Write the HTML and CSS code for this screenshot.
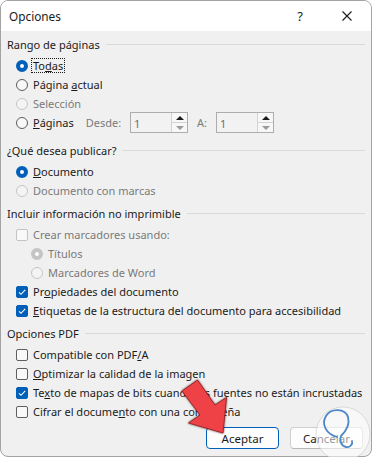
FILE: index.html
```html
<!DOCTYPE html>
<html lang="es">
  <head>
    <meta charset="utf-8">
    <title>Opciones</title>
    <link rel="stylesheet" href="styles.css">
  </head>
  <body>
    <div class="dialog">
      <div class="titlebar">
        <span class="title">Opciones</span>
        <span class="help">?</span>
        <span class="close">
          <svg width="10" height="10" viewBox="0 0 10 10"><path d="M0.5 0.5 L9.5 9.5 M9.5 0.5 L0.5 9.5" stroke="#1a1a1a" stroke-width="1.1" fill="none"/></svg>
        </span>
      </div>

      <div class="content">
        <div class="group-head"><span>Rango de páginas</span><i class="rule"></i></div>
        <div class="opt tight"><span class="radio on"></span><span class="focus">To<u>d</u>as</span></div>
        <div class="opt"><span class="radio"></span><span>Página <u>a</u>ctual</span></div>
        <div class="opt disabled"><span class="radio"></span><span>Selección</span></div>
        <div class="opt">
          <span class="radio"></span><span><u>P</u>áginas</span>
          <span class="muted desde">Desde:</span>
          <span class="spin"><span class="val">1</span><span class="arrows"><b class="up"></b><b class="down"></b></span></span>
          <span class="muted a-label">A:</span>
          <span class="spin"><span class="val">1</span><span class="arrows"><b class="up"></b><b class="down"></b></span></span>
        </div>

        <div class="group-head g2"><span>¿Qué desea publicar?</span><i class="rule"></i></div>
        <div class="opt"><span class="radio on"></span><span><u>D</u>ocumento</span></div>
        <div class="opt disabled"><span class="radio"></span><span>Documento con marcas</span></div>

        <div class="group-head g3"><span>Incluir información no imprimible</span><i class="rule"></i></div>
        <div class="opt disabled"><span class="check"></span><span>Crear marcadores usando:</span></div>
        <div class="opt sub disabled"><span class="radio on"></span><span>Títulos</span></div>
        <div class="opt sub disabled"><span class="radio"></span><span>Marcadores de Word</span></div>
        <div class="opt"><span class="check on"><svg width="12" height="12" viewBox="0 0 12 12"><path d="M3 6.3 L5 8.3 L9.2 3.8" stroke="#fff" stroke-width="1.1" fill="none"/></svg></span><span>Pr<u>o</u>piedades del documento</span></div>
        <div class="opt"><span class="check on"><svg width="12" height="12" viewBox="0 0 12 12"><path d="M3 6.3 L5 8.3 L9.2 3.8" stroke="#fff" stroke-width="1.1" fill="none"/></svg></span><span><u>E</u>tiquetas de la estructura del documento para accesibilidad</span></div>

        <div class="group-head g3"><span>Opciones PDF</span><i class="rule"></i></div>
        <div class="opt"><span class="check"></span><span>Compatible con PDF<u>/</u>A</span></div>
        <div class="opt"><span class="check"></span><span><u>O</u>ptimizar la calidad de la imagen</span></div>
        <div class="opt"><span class="check on"><svg width="12" height="12" viewBox="0 0 12 12"><path d="M3 6.3 L5 8.3 L9.2 3.8" stroke="#fff" stroke-width="1.1" fill="none"/></svg></span><span>Te<u>x</u>to de mapas de bits cuando las fuentes no están incrustadas</span></div>
        <div class="opt"><span class="check"></span><span>Cifrar el docume<u>n</u>to con una contraseña</span></div>

        <div class="buttons">
          <button class="btn primary">Aceptar</button>
          <button class="btn">Cancelar</button>
        </div>
      </div>
    </div>

    <svg class="overlay" width="372" height="458" viewBox="0 0 372 458">
      <defs>
        <filter id="shade" x="-20%" y="-20%" width="140%" height="140%">
          <feDropShadow dx="0" dy="0" stdDeviation="1.2" flood-color="#3a0000" flood-opacity="0.8"/>
        </filter>
      </defs>
      <polygon points="182,391 197.5,380 215,405 226.5,397.5 223,433 188.5,423 200,415" fill="#ef4347" stroke="#8a1c1c" stroke-width="0.8" filter="url(#shade)"/>
      <circle cx="343" cy="434" r="27" fill="rgba(255,255,255,0.55)" stroke="rgba(190,190,190,0.5)" stroke-width="1"/>
      <path d="M337 437 C326 434 321 424 326 416 C331 408 345 408 348 417 C350 424 346 431 341 436 C339 440 341 446 346 447 C350 448 353 444 352 441" fill="none" stroke="#4d86c9" stroke-width="1.8" stroke-linecap="round"/>
    </svg>
  </body>
</html>
```

FILE: styles.css
```css
* {
  box-sizing: border-box;
}

body {
  margin: 0;
  position: relative;
  background: #ffffff;
  font-family: "Noto Sans", "Open Sans", sans-serif;
  font-size: 11px;
  color: #1b1b1b;
}

.dialog {
  height: 457px;
  border: 1px solid #a3a3a3;
  border-radius: 8px;
  background: #f0f0f0;
  overflow: hidden;
}

.titlebar {
  height: 30px;
  background: #ffffff;
  display: flex;
  align-items: center;
  padding-left: 8px;
}

.title {
  flex: 1;
  font-size: 11.8px;
}

.help {
  font-size: 13px;
  margin-right: 39px;
}

.close {
  display: flex;
  margin-right: 19px;
}

.content {
  padding: 4px 6px 0 6px;
}

.group-head {
  height: 19px;
  display: flex;
  align-items: center;
  margin-bottom: 2px;
}

.group-head .rule {
  flex: 1;
  height: 1px;
  background: #d9d9d9;
  margin-left: 6px;
}

.g2 {
  margin-top: 9px;
}

.g3 {
  margin-top: 4px;
}

.opt {
  height: 19px;
  display: flex;
  align-items: center;
  gap: 5px;
  padding-left: 9px;
  white-space: nowrap;
}

.opt.tight {
  gap: 3px;
}

.opt.sub {
  padding-left: 24px;
}

.opt.disabled {
  color: #7a7a7a;
}

.focus {
  border: 1px dotted #1b1b1b;
  padding: 0 1px;
  line-height: 13px;
}

.radio {
  width: 12px;
  height: 12px;
  flex: none;
  border-radius: 50%;
  border: 1px solid #5c5c5c;
  background: #f8f8f8;
}

.radio.on {
  border: 4px solid #005fb8;
  background: #ffffff;
}

.disabled .radio {
  border-color: #c6c6c6;
  background: #f4f4f4;
}

.disabled .radio.on {
  border: 4px solid #c4c4c4;
  background: #ffffff;
}

.check {
  width: 12px;
  height: 12px;
  flex: none;
  border-radius: 2px;
  border: 1px solid #5f5f5f;
  background: #f9f9f9;
  display: flex;
}

.check.on {
  border-color: #005fb8;
  background: #005fb8;
}

.check.on svg {
  margin: -1px;
}

.disabled .check {
  border-color: #c4c4c4;
}

.muted {
  color: #7a7a7a;
}

.desde {
  margin-left: 7px;
}

.a-label {
  margin-left: 4px;
}

.spin {
  width: 58px;
  height: 21px;
  flex: none;
  display: flex;
  border: 1px solid #adadad;
  background: #f2f2f2;
  margin-left: 4px;
}

.spin .val {
  flex: 1;
  color: #6d6d6d;
  padding: 3px 0 0 3px;
}

.spin .arrows {
  width: 16px;
  display: flex;
  flex-direction: column;
  border-left: 1px solid #d4d4d4;
}

.spin .arrows b {
  flex: 1;
  display: flex;
  align-items: center;
  justify-content: center;
  background: #f7f7f7;
}

.spin .arrows .up {
  border-bottom: 1px solid #d4d4d4;
}

.spin .arrows .up::after {
  content: "";
  border-left: 4px solid transparent;
  border-right: 4px solid transparent;
  border-bottom: 4px solid #1b1b1b;
}

.spin .arrows .down::after {
  content: "";
  border-left: 4px solid transparent;
  border-right: 4px solid transparent;
  border-top: 4px solid #9a9a9a;
}

.buttons {
  display: flex;
  justify-content: flex-end;
  gap: 11px;
  margin-top: 6px;
  padding-right: 2px;
}

.btn {
  width: 73px;
  height: 22px;
  font-family: inherit;
  font-size: 11.5px;
  color: #1b1b1b;
  background: #fdfdfd;
  border: 1px solid #d0d0d0;
  border-bottom-color: #b8b8b8;
  border-radius: 4px;
  padding: 0;
}

.btn.primary {
  border: 1px solid #005fb8;
}

.overlay {
  position: absolute;
  top: 0;
  left: 0;
  pointer-events: none;
}
```
